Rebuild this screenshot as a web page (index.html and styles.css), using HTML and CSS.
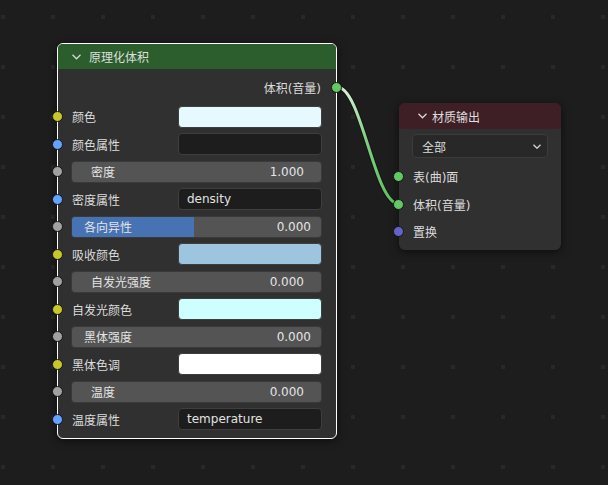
FILE: index.html
```html
<!DOCTYPE html>
<html lang="zh">
<head>
  <meta charset="UTF-8">
  <title>节点编辑器</title>
  <link rel="stylesheet" href="styles.css">
</head>
<body>

<svg class="wires" width="608" height="485" viewBox="0 0 608 485">
  <defs>
    <linearGradient id="wireGrad" x1="337" y1="87" x2="399" y2="204" gradientUnits="userSpaceOnUse">
      <stop offset="0" stop-color="#e4f5e4"/>
      <stop offset="0.45" stop-color="#7fcf7f"/>
      <stop offset="1" stop-color="#5cbf5c"/>
    </linearGradient>
  </defs>
  <path class="wire-outline" d="M337,87 C362,87 374,204 399,204"/>
  <path class="wire" d="M337,87 C362,87 374,204 399,204"/>
</svg>

<!-- 原理化体积 -->
<div class="node node-volume">
  <div class="node-header header-green">
    <svg class="chevron" width="9" height="6" viewBox="0 0 9 6"><polyline points="0.5,0.8 4.5,4.8 8.5,0.8"/></svg>
    <span>原理化体积</span>
  </div>
  <div class="node-body">
    <div class="out-row">
      <span>体积(音量)</span>
      <span class="sock sock-out green"></span>
    </div>
    <div class="inputs">
      <div class="row">
        <span class="sock yellow"></span>
        <span class="label">颜色</span>
        <span class="field swatch sw-color"></span>
      </div>
      <div class="row">
        <span class="sock blue"></span>
        <span class="label">颜色属性</span>
        <span class="field text-field"></span>
      </div>
      <div class="row">
        <span class="sock grey"></span>
        <div class="slider pad-a"><span>密度</span><span>1.000</span></div>
      </div>
      <div class="row">
        <span class="sock blue"></span>
        <span class="label">密度属性</span>
        <span class="field text-field">density</span>
      </div>
      <div class="row">
        <span class="sock grey"></span>
        <div class="slider pad-b"><span class="fill" style="width: 49%"></span><span>各向异性</span><span>0.000</span></div>
      </div>
      <div class="row">
        <span class="sock yellow"></span>
        <span class="label">吸收颜色</span>
        <span class="field swatch sw-absorb"></span>
      </div>
      <div class="row">
        <span class="sock grey"></span>
        <div class="slider pad-a"><span>自发光强度</span><span>0.000</span></div>
      </div>
      <div class="row">
        <span class="sock yellow"></span>
        <span class="label">自发光颜色</span>
        <span class="field swatch sw-emit"></span>
      </div>
      <div class="row">
        <span class="sock grey"></span>
        <div class="slider pad-b"><span>黑体强度</span><span>0.000</span></div>
      </div>
      <div class="row">
        <span class="sock yellow"></span>
        <span class="label">黑体色调</span>
        <span class="field swatch sw-white"></span>
      </div>
      <div class="row">
        <span class="sock grey"></span>
        <div class="slider pad-a"><span>温度</span><span>0.000</span></div>
      </div>
      <div class="row">
        <span class="sock blue"></span>
        <span class="label">温度属性</span>
        <span class="field text-field">temperature</span>
      </div>
    </div>
  </div>
</div>

<!-- 材质输出 -->
<div class="node node-output">
  <div class="node-header header-red">
    <svg class="chevron" width="9" height="6" viewBox="0 0 9 6"><polyline points="0.5,0.8 4.5,4.8 8.5,0.8"/></svg>
    <span>材质输出</span>
  </div>
  <div class="node-body">
    <div class="dropdown">
      <span>全部</span>
      <svg class="chevron small" width="8" height="5" viewBox="0 0 8 5"><polyline points="0.5,0.8 4,4.2 7.5,0.8"/></svg>
    </div>
    <div class="inputs">
      <div class="row">
        <span class="sock green"></span>
        <span class="label">表(曲)面</span>
      </div>
      <div class="row">
        <span class="sock green"></span>
        <span class="label">体积(音量)</span>
      </div>
      <div class="row">
        <span class="sock purple"></span>
        <span class="label">置换</span>
      </div>
    </div>
  </div>
</div>

</body>
</html>
```

FILE: styles.css
```css
body {
  margin: 0;
  width: 608px;
  height: 485px;
  position: relative;
  overflow: hidden;
  background-color: #1d1d1d;
  background-image: conic-gradient(at 4px 4px, #1d1d1d 75%, #282828 0);
  background-size: 50px 50px;
  background-position: 1px 15px;
  font-family: "DejaVu Sans", "Noto Sans CJK SC", sans-serif;
  font-size: 12px;
  color: #dcdcdc;
}

/* wires */
.wires {
  position: absolute;
  top: 0;
  left: 0;
}

.wire-outline {
  fill: none;
  stroke: #151515;
  stroke-width: 5;
}

.wire {
  fill: none;
  stroke: url(#wireGrad);
  stroke-width: 3;
}

/* nodes */
.node {
  position: absolute;
  background: #303030;
  border-radius: 6px;
  box-shadow: 0 2px 8px rgba(0, 0, 0, 0.55);
  box-sizing: border-box;
}

.node-volume {
  left: 57px;
  top: 43px;
  width: 280px;
  border: 1px solid #fff;
}

.node-output {
  left: 399px;
  top: 103px;
  width: 162px;
}

.node-header {
  display: flex;
  align-items: center;
  color: #dedede;
}

.header-green {
  height: 25px;
  padding-left: 14px;
  background: #2b5e2c;
  border-radius: 5px 5px 0 0;
}

.header-red {
  height: 26px;
  padding-left: 19px;
  background: #3f1f26;
  border-radius: 6px 6px 0 0;
}

.chevron {
  margin-right: 8px;
}

.header-red .chevron {
  margin-right: 5px;
}

.chevron polyline {
  fill: none;
  stroke: #d6d6d6;
  stroke-width: 1.3;
}

.node-volume .node-body {
  padding: 4px 0 5px;
}

.node-output .node-body {
  padding: 5px 0 4px;
}

.out-row {
  height: 28px;
  margin-bottom: 2px;
  display: flex;
  align-items: center;
  justify-content: flex-end;
  padding-right: 15px;
  position: relative;
}

.row {
  height: 27.5px;
  display: flex;
  align-items: center;
  padding: 0 14px;
  position: relative;
}

.label {
  flex: 1;
}

/* sockets */
.sock {
  position: absolute;
  left: -6px;
  top: 50%;
  width: 11px;
  height: 11px;
  margin-top: -5.5px;
  border-radius: 50%;
  border: 1px solid #151515;
  box-sizing: border-box;
}

.sock-out {
  left: auto;
  right: -6px;
}

.yellow { background: #c7c729; }
.blue { background: #63a3ff; }
.grey { background: #a1a1a1; }
.green { background: #63c763; }
.purple { background: #6363c7; }

/* fields */
.field {
  width: 144px;
  height: 22px;
  box-sizing: border-box;
  border: 1px solid #3e3e3e;
  border-radius: 4px;
}

.text-field {
  background: #1d1d1d;
  display: flex;
  align-items: center;
  padding-left: 8px;
  color: #e2e2e2;
}

.sw-color { background: #e6f9ff; }
.sw-absorb { background: #9dc5df; }
.sw-emit { background: #cdffff; }
.sw-white { background: #ffffff; }

.slider {
  flex: 1;
  margin-left: -1px;
  height: 22px;
  box-sizing: border-box;
  background: #545454;
  border: 1px solid #3a3a3a;
  border-radius: 4px;
  display: flex;
  align-items: center;
  justify-content: space-between;
  position: relative;
  overflow: hidden;
  color: #e4e4e4;
}

.slider span {
  position: relative;
}

.slider .fill {
  position: absolute;
  left: 0;
  top: 0;
  bottom: 0;
  background: #4772b3;
}

.pad-a {
  padding: 0 17px 0 19px;
}

.pad-b {
  padding: 0 10px 0 12px;
}

/* dropdown */
.dropdown {
  margin: 0 13px 5px;
  height: 24px;
  box-sizing: border-box;
  background: #282828;
  border: 1px solid #3c3c3c;
  border-radius: 4px;
  display: flex;
  align-items: center;
  justify-content: space-between;
  padding: 0 6px 0 9px;
}

.dropdown .chevron {
  margin: 1px 0 0;
}
```
